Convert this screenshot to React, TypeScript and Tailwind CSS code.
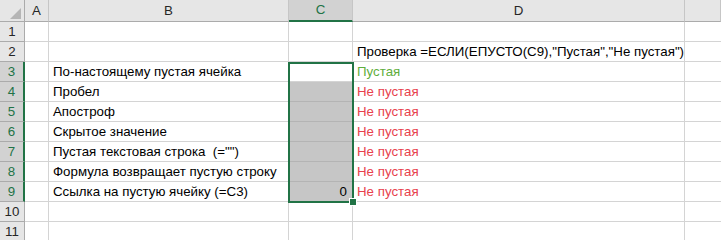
import { Fragment } from 'react';

type Row = { n: number; b?: string; c?: string; d?: string; dColor?: string };

const rows: Row[] = [
  { n: 1 },
  { n: 2, d: 'Проверка =ЕСЛИ(ЕПУСТО(C9),"Пустая","Не пустая")', dColor: 'text-black' },
  { n: 3, b: 'По-настоящему пустая ячейка', d: 'Пустая', dColor: 'text-[#5fae3d]' },
  { n: 4, b: 'Пробел', d: 'Не пустая', dColor: 'text-[#e8414d]' },
  { n: 5, b: 'Апостроф', d: 'Не пустая', dColor: 'text-[#e8414d]' },
  { n: 6, b: 'Скрытое значение', d: 'Не пустая', dColor: 'text-[#e8414d]' },
  { n: 7, b: 'Пустая текстовая строка  (="")', d: 'Не пустая', dColor: 'text-[#e8414d]' },
  { n: 8, b: 'Формула возвращает пустую строку', d: 'Не пустая', dColor: 'text-[#e8414d]' },
  { n: 9, b: 'Ссылка на пустую ячейку (=C3)', c: '0', d: 'Не пустая', dColor: 'text-[#e8414d]' },
  { n: 10 },
  { n: 11 },
];

const isSel = (n: number) => n >= 3 && n <= 9;

function ColHeader({ label, active }: { label: string; active?: boolean }) {
  if (active) {
    return (
      <div className="flex items-center justify-center border-r border-b-2 border-r-[#c6c6c6] border-b-[#217346] bg-[#d2d2d2] text-[#217346]">
        {label}
      </div>
    );
  }
  return (
    <div className="flex items-center justify-center border-r border-b border-r-[#c6c6c6] border-b-[#ababab] bg-[#e6e6e6] text-[#262626]">
      {label}
    </div>
  );
}

function RowHeader({ n }: { n: number }) {
  if (isSel(n)) {
    return (
      <div className="flex items-center justify-center border-r-2 border-b border-r-[#217346] border-b-[#ababab] bg-[#d2d2d2] text-[#217346]">
        {n}
      </div>
    );
  }
  return (
    <div className="flex items-center justify-center border-r border-b border-r-[#ababab] border-b-[#ababab] bg-[#e6e6e6] text-[#262626]">
      {n}
    </div>
  );
}

export default function App() {
  return (
    <div className="relative h-[240px] w-[721px] overflow-hidden bg-white font-['Liberation_Sans',Arial,sans-serif] text-[13.3px] leading-none">
      <div className="grid grid-cols-[25px_24px_240px_64px_332px_36px] grid-rows-[22px_repeat(11,20px)]">
        <div className="relative border-r border-b border-r-[#ababab] border-b-[#ababab] bg-[#e6e6e6]">
          <svg className="absolute left-0 top-0" width="24" height="21" viewBox="0 0 24 21">
            <polygon points="10,19 21,19 21,8" fill="#b5b5b5" />
          </svg>
        </div>
        <ColHeader label="A" />
        <ColHeader label="B" />
        <ColHeader label="C" active />
        <ColHeader label="D" />
        <ColHeader label="" />

        {rows.map((r) => (
          <Fragment key={r.n}>
            <RowHeader n={r.n} />
            <div className="border-r border-b border-[#d4d4d4]" />
            <div className="flex items-end whitespace-pre border-r border-b border-[#d4d4d4] pb-[3px] pl-[4px] text-black">
              {r.b}
            </div>
            <div
              className={
                r.n >= 4 && r.n <= 9
                  ? 'flex items-end justify-end border-r border-b border-[#b4b4b4] bg-[#c6c6c6] pb-[3px] pr-[5px] text-black'
                  : 'border-r border-b border-[#d4d4d4]'
              }
            >
              {r.c}
            </div>
            <div className={`relative z-10 flex items-end overflow-visible whitespace-pre border-r border-b border-[#d4d4d4] pb-[3px] pl-[4px] ${r.dColor ?? ''}`}>
              {r.d}
            </div>
            <div className="border-b border-[#d4d4d4]" />
          </Fragment>
        ))}
      </div>

      {/* selection C3:C9 */}
      <div className="pointer-events-none absolute left-[288px] top-[62px] z-20 h-[141px] w-[66px] border-2 border-[#217346]" />
      <div className="pointer-events-none absolute left-[349px] top-[198px] z-30 h-[8px] w-[8px] border border-white bg-[#217346]" />
    </div>
  );
}
